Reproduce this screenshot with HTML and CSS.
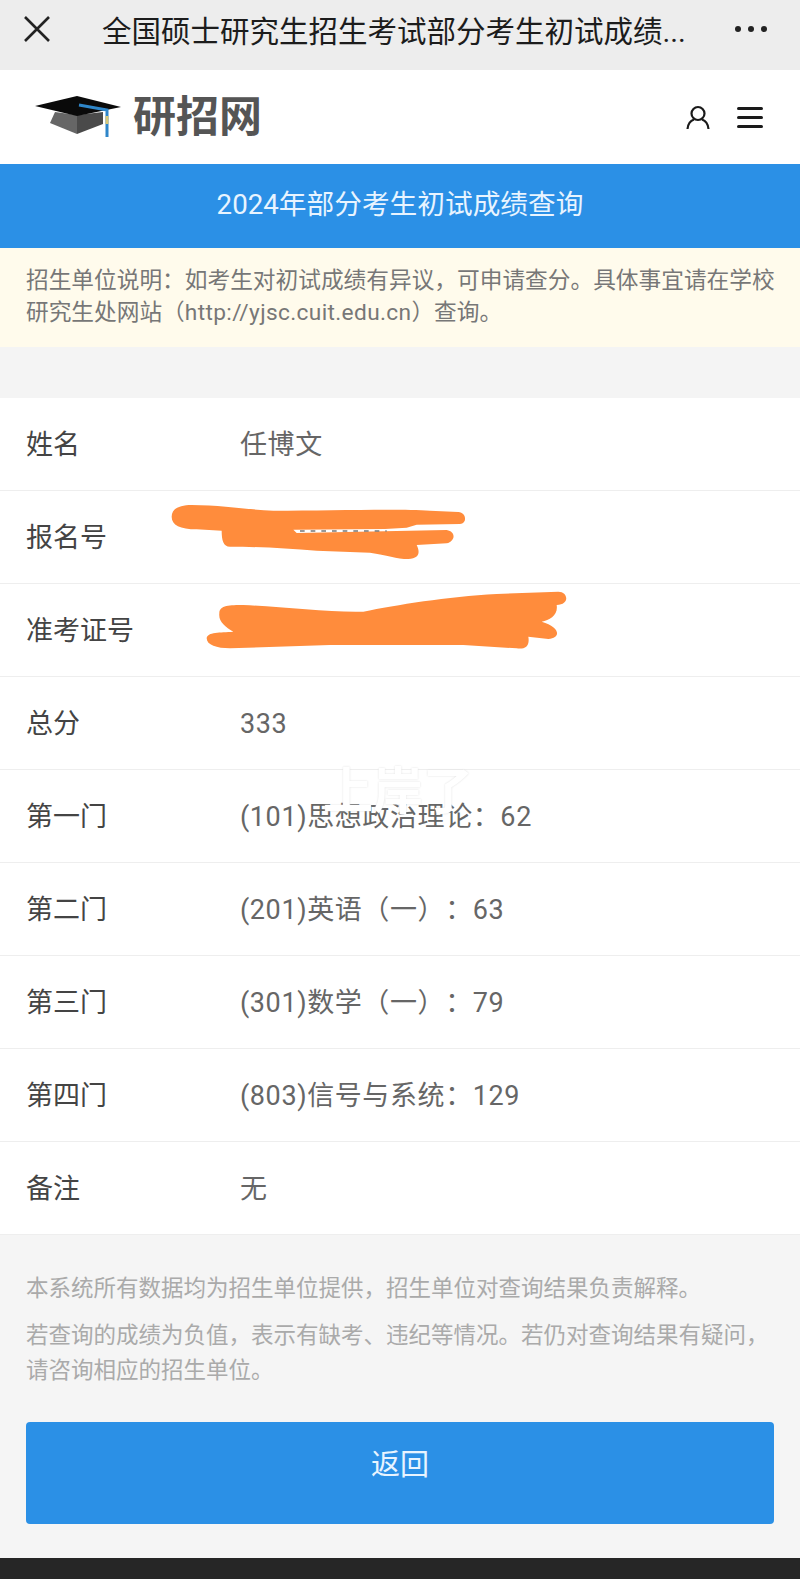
FILE: index.html
```html
<!DOCTYPE html>
<html lang="zh-CN">
<head>
    <meta charset="UTF-8">
    <meta name="viewport" content="width=device-width, initial-scale=1.0">
    <title>2024年部分考生初试成绩查询</title>
    <link rel="stylesheet" href="styles.css">
</head>
<body>
    <div class="top-bar">
        <svg class="close-icon" viewBox="0 0 26 26"><path d="M1 1L25 25M25 1L1 25"/></svg>
        <div class="top-title">全国硕士研究生招生考试部分考生初试成绩...</div>
        <div class="more-dots"><span></span><span></span><span></span></div>
    </div>

    <div class="site-header">
        <div class="logo">
            <svg class="logo-cap" viewBox="0 0 90 44">
                <path d="M20 17L15 28L42 39L42 20Z" fill="#666"/>
                <path d="M42 39L68 29L68 17L42 20Z" fill="#4a4a4a"/>
                <path d="M0 11L42 1L86 12L42 21Z" fill="#0a0a0a"/>
                <path d="M44 10L72 15L72 42" fill="none" stroke="#2f86c9" stroke-width="3"/>
                <path d="M72 21L72 29" stroke="#d8c878" stroke-width="3"/>
            </svg>
            <span class="logo-text">研招网</span>
        </div>
        <div class="header-icons">
            <svg class="user-icon" viewBox="0 0 24 25"><circle cx="12" cy="8.500" r="6.500"/><path d="M1.500 24C2 18.500 5 15.500 8 14.500M22.500 24C22 18.500 19 15.500 16 14.500"/></svg>
            <div class="menu-icon"><span></span><span></span><span></span></div>
        </div>
    </div>

    <div class="page-title">2024年部分考生初试成绩查询</div>
    <div class="notice">招生单位说明：如考生对初试成绩有异议，可申请查分。具体事宜请在学校研究生处网站（<span class="notice-link">http://yjsc.cuit.edu.cn</span>）查询。</div>

    <div class="result-card">
        <div class="row"><div class="row-label">姓名</div><div class="row-value">任博文</div></div>
        <div class="row"><div class="row-label">报名号</div><div class="row-value"></div></div>
        <div class="row"><div class="row-label">准考证号</div><div class="row-value"></div></div>
        <div class="row"><div class="row-label">总分</div><div class="row-value">333</div></div>
        <div class="row"><div class="row-label">第一门</div><div class="row-value">(101)思想政治理论：62</div></div>
        <div class="row"><div class="row-label">第二门</div><div class="row-value">(201)英语（一）：63</div></div>
        <div class="row"><div class="row-label">第三门</div><div class="row-value">(301)数学（一）：79</div></div>
        <div class="row"><div class="row-label">第四门</div><div class="row-value">(803)信号与系统：129</div></div>
        <div class="row"><div class="row-label">备注</div><div class="row-value">无</div></div>

        <!-- scribbles over the two numbers -->
        <svg class="scribbles" viewBox="0 0 1380 510">
            <path d="M125 80C125 55 150 45 185 45C280 45 360 60 430 62C600 62 800 55 900 62L985 66C1010 68 1012 100 990 102L860 104L830 113L765 117L490 119L500 129L950 120C980 125 975 155 950 160L860 165C870 185 870 205 835 207C800 207 770 195 720 188L560 182C470 175 380 170 300 170C280 170 275 150 275 122L200 118C150 118 125 105 125 80Z"/>
            <path d="M268 370C268 345 300 345 340 345C450 350 600 368 700 365C800 345 950 320 1100 312L1285 305C1315 305 1320 345 1280 345C1285 375 1260 390 1235 395C1290 410 1295 445 1255 447L1195 440C1200 470 1185 478 1160 475L1000 465L600 465L300 475C260 475 230 465 230 445C232 425 270 428 310 425C285 410 265 395 268 370Z"/>
            <path class="slit" d="M510 123L770 123" />
        </svg>
        <div class="watermark">上岸了</div>
    </div>

    <div class="footer-note">
        <p>本系统所有数据均为招生单位提供，招生单位对查询结果负责解释。</p>
        <p>若查询的成绩为负值，表示有缺考、违纪等情况。若仍对查询结果有疑问，请咨询相应的招生单位。</p>
        <button class="back-btn" type="button">返回</button>
    </div>
    <div class="bottom-strip"></div>
</body>
</html>
```

FILE: styles.css
```css
body {
    margin: 0;
    height: 1579px;
    overflow: hidden;
    background-color: #f4f4f4;
    font-family: "Roboto", "Noto Sans CJK SC", sans-serif;
    text-spacing-trim: space-all;
}

.top-bar {
    height: 70px;
    box-sizing: border-box;
    padding: 0 24px 13px 24px;
    display: flex;
    align-items: center;
    background-color: #ededed;
    color: #1c1c1c;
}

.close-icon {
    width: 26px;
    height: 26px;
    flex: none;
    fill: none;
    stroke: #222;
    stroke-width: 2.600;
}

.top-title {
    margin-left: 52px;
    font-size: 29.500px;
    white-space: nowrap;
}

.more-dots {
    margin-left: auto;
    margin-right: 9px;
    display: flex;
    gap: 7px;
}

.more-dots span {
    width: 6px;
    height: 6px;
    border-radius: 50%;
    background-color: #222;
}

.site-header {
    height: 94px;
    box-sizing: border-box;
    padding: 0 37px 0 35px;
    display: flex;
    align-items: center;
    justify-content: space-between;
    background-color: white;
}

.logo {
    display: flex;
    align-items: center;
    gap: 8px;
}

.logo-cap {
    width: 90px;
    height: 44px;
}

.logo-text {
    font-size: 43px;
    line-height: 44px;
    font-weight: 700;
    color: #555;
}

.header-icons {
    display: flex;
    align-items: center;
    gap: 27px;
}

.user-icon {
    width: 24px;
    height: 25px;
    fill: none;
    stroke: #1a1a1a;
    stroke-width: 2.200;
}

.menu-icon {
    width: 26px;
    display: flex;
    flex-direction: column;
    gap: 6px;
}

.menu-icon span {
    height: 3px;
    border-radius: 2px;
    background-color: #1a1a1a;
}

.page-title {
    height: 84px;
    line-height: 82px;
    text-align: center;
    font-size: 27.700px;
    color: #e8f4ff;
    background-color: #2b90e6;
}

.notice {
    height: 99px;
    box-sizing: border-box;
    padding: 17px 25px 0 26px;
    font-size: 22.700px;
    line-height: 32px;
    color: #777;
    background-color: #fffbec;
}

.notice-link {
    letter-spacing: 0.350px;
}

.result-card {
    position: relative;
    margin-top: 51px;
    background-color: white;
}

.row {
    height: 93px;
    box-sizing: border-box;
    padding: 1px 0 0 26px;
    display: flex;
    align-items: center;
    border-bottom: 1px solid #eeeeee;
    font-size: 27px;
    line-height: 36px;
}

.row:last-of-type {
    border-bottom: none;
}

.row-label {
    width: 214px;
    color: #444;
}

.row-value {
    color: #666;
    letter-spacing: 0.600px;
}

.scribbles {
    position: absolute;
    left: 130px;
    top: 92px;
    width: 460px;
    height: 170px;
    fill: #ff8c3c;
}

.scribbles .slit {
    fill: none;
    stroke: #777;
    stroke-width: 4;
    stroke-dasharray: 14 18;
}

.watermark {
    position: absolute;
    left: 323px;
    top: 364px;
    font-size: 50px;
    line-height: 60px;
    font-weight: 700;
    color: white;
    text-shadow: 0 0 2px #ddd;
}

.footer-note {
    height: 323px;
    box-sizing: border-box;
    padding: 36px 26px 0 26px;
    background-color: #f5f5f5;
    color: #aaa;
    font-size: 22.500px;
    line-height: 35px;
}

.footer-note p {
    margin: 0 0 12px 0;
}

.back-btn {
    display: block;
    width: 100%;
    height: 102px;
    margin-top: 34px;
    padding: 0 0 22px 0;
    border: none;
    border-radius: 4px;
    background-color: #2b90e6;
    color: #e8f4ff;
    font-family: inherit;
    font-size: 29px;
}

.bottom-strip {
    height: 21px;
    background-color: #262626;
}
```
